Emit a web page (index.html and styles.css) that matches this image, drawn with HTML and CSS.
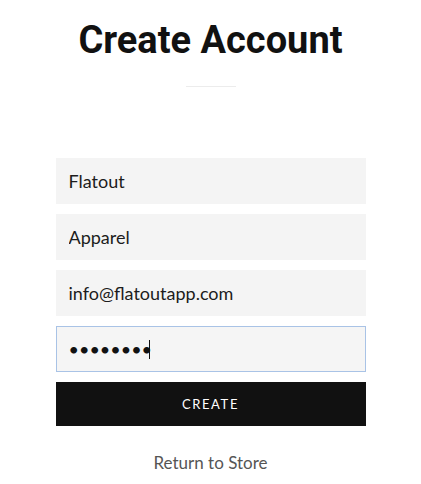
FILE: index.html
```html
<!DOCTYPE html>
<html lang="en">
<head>
<meta charset="utf-8">
<title>Create Account</title>
<link rel="stylesheet" href="styles.css">
</head>
<body>
<main class="account">
  <h1 class="account__title">Create Account</h1>
  <hr class="account__rule">
  <form class="account__form">
    <input class="field" type="text" value="Flatout" aria-label="First name">
    <input class="field" type="text" value="Apparel" aria-label="Last name">
    <input class="field" type="email" value="info@flatoutapp.com" aria-label="Email">
    <div class="field-wrap">
      <input class="field field--focused" type="password" value="12345678" aria-label="Password">
      <span class="caret"></span>
    </div>
    <button class="btn" type="button">CREATE</button>
  </form>
  <a class="account__link" href="#">Return to Store</a>
</main>
</body>
</html>
```
FILE: styles.css
```css
* { box-sizing: border-box; }
html, body { margin: 0; padding: 0; background: #fff; }
body { font-family: "Lato", "Liberation Sans", sans-serif; color: #1c1c1c; }

.account {
  width: 310px;
  margin: 0 auto;
  padding-top: 19px;
  display: flex;
  flex-direction: column;
  align-items: center;
}
.account__title {
  margin: 0;
  font-family: "Roboto", "Liberation Sans", sans-serif;
  font-weight: 700;
  font-size: 38px;
  line-height: 43px;
  color: #111;
  letter-spacing: 0;
}
.account__rule {
  width: 50px;
  height: 1px;
  border: 0;
  background: #ececec;
  margin: 24px 0 71px;
}
.account__form {
  width: 100%;
  display: flex;
  flex-direction: column;
  gap: 10px;
}
.field {
  display: block;
  width: 100%;
  height: 46px;
  padding: 0 12px;
  border: 1px solid #f4f4f4;
  background: #f4f4f4;
  font-family: "Lato", sans-serif;
  font-size: 18px;
  color: #1c1c1c;
  outline: none;
  border-radius: 0;
}
.field--focused {
  border-color: #a9c3e6;
  background: #f5f5f5;
  color: #111;
}
.field-wrap { position: relative; }
.caret {
  position: absolute;
  left: 93px;
  top: 14px;
  width: 1px;
  height: 19px;
  background: #111;
}
.btn {
  height: 44px;
  width: 100%;
  border: 0;
  background: #111;
  color: #fff;
  font-family: "Lato", sans-serif;
  font-size: 13px;
  letter-spacing: 1.6px;
  cursor: pointer;
}
.account__link {
  margin-top: 25px;
  font-size: 17px;
  line-height: 24px;
  color: #555;
  text-decoration: none;
}
```
